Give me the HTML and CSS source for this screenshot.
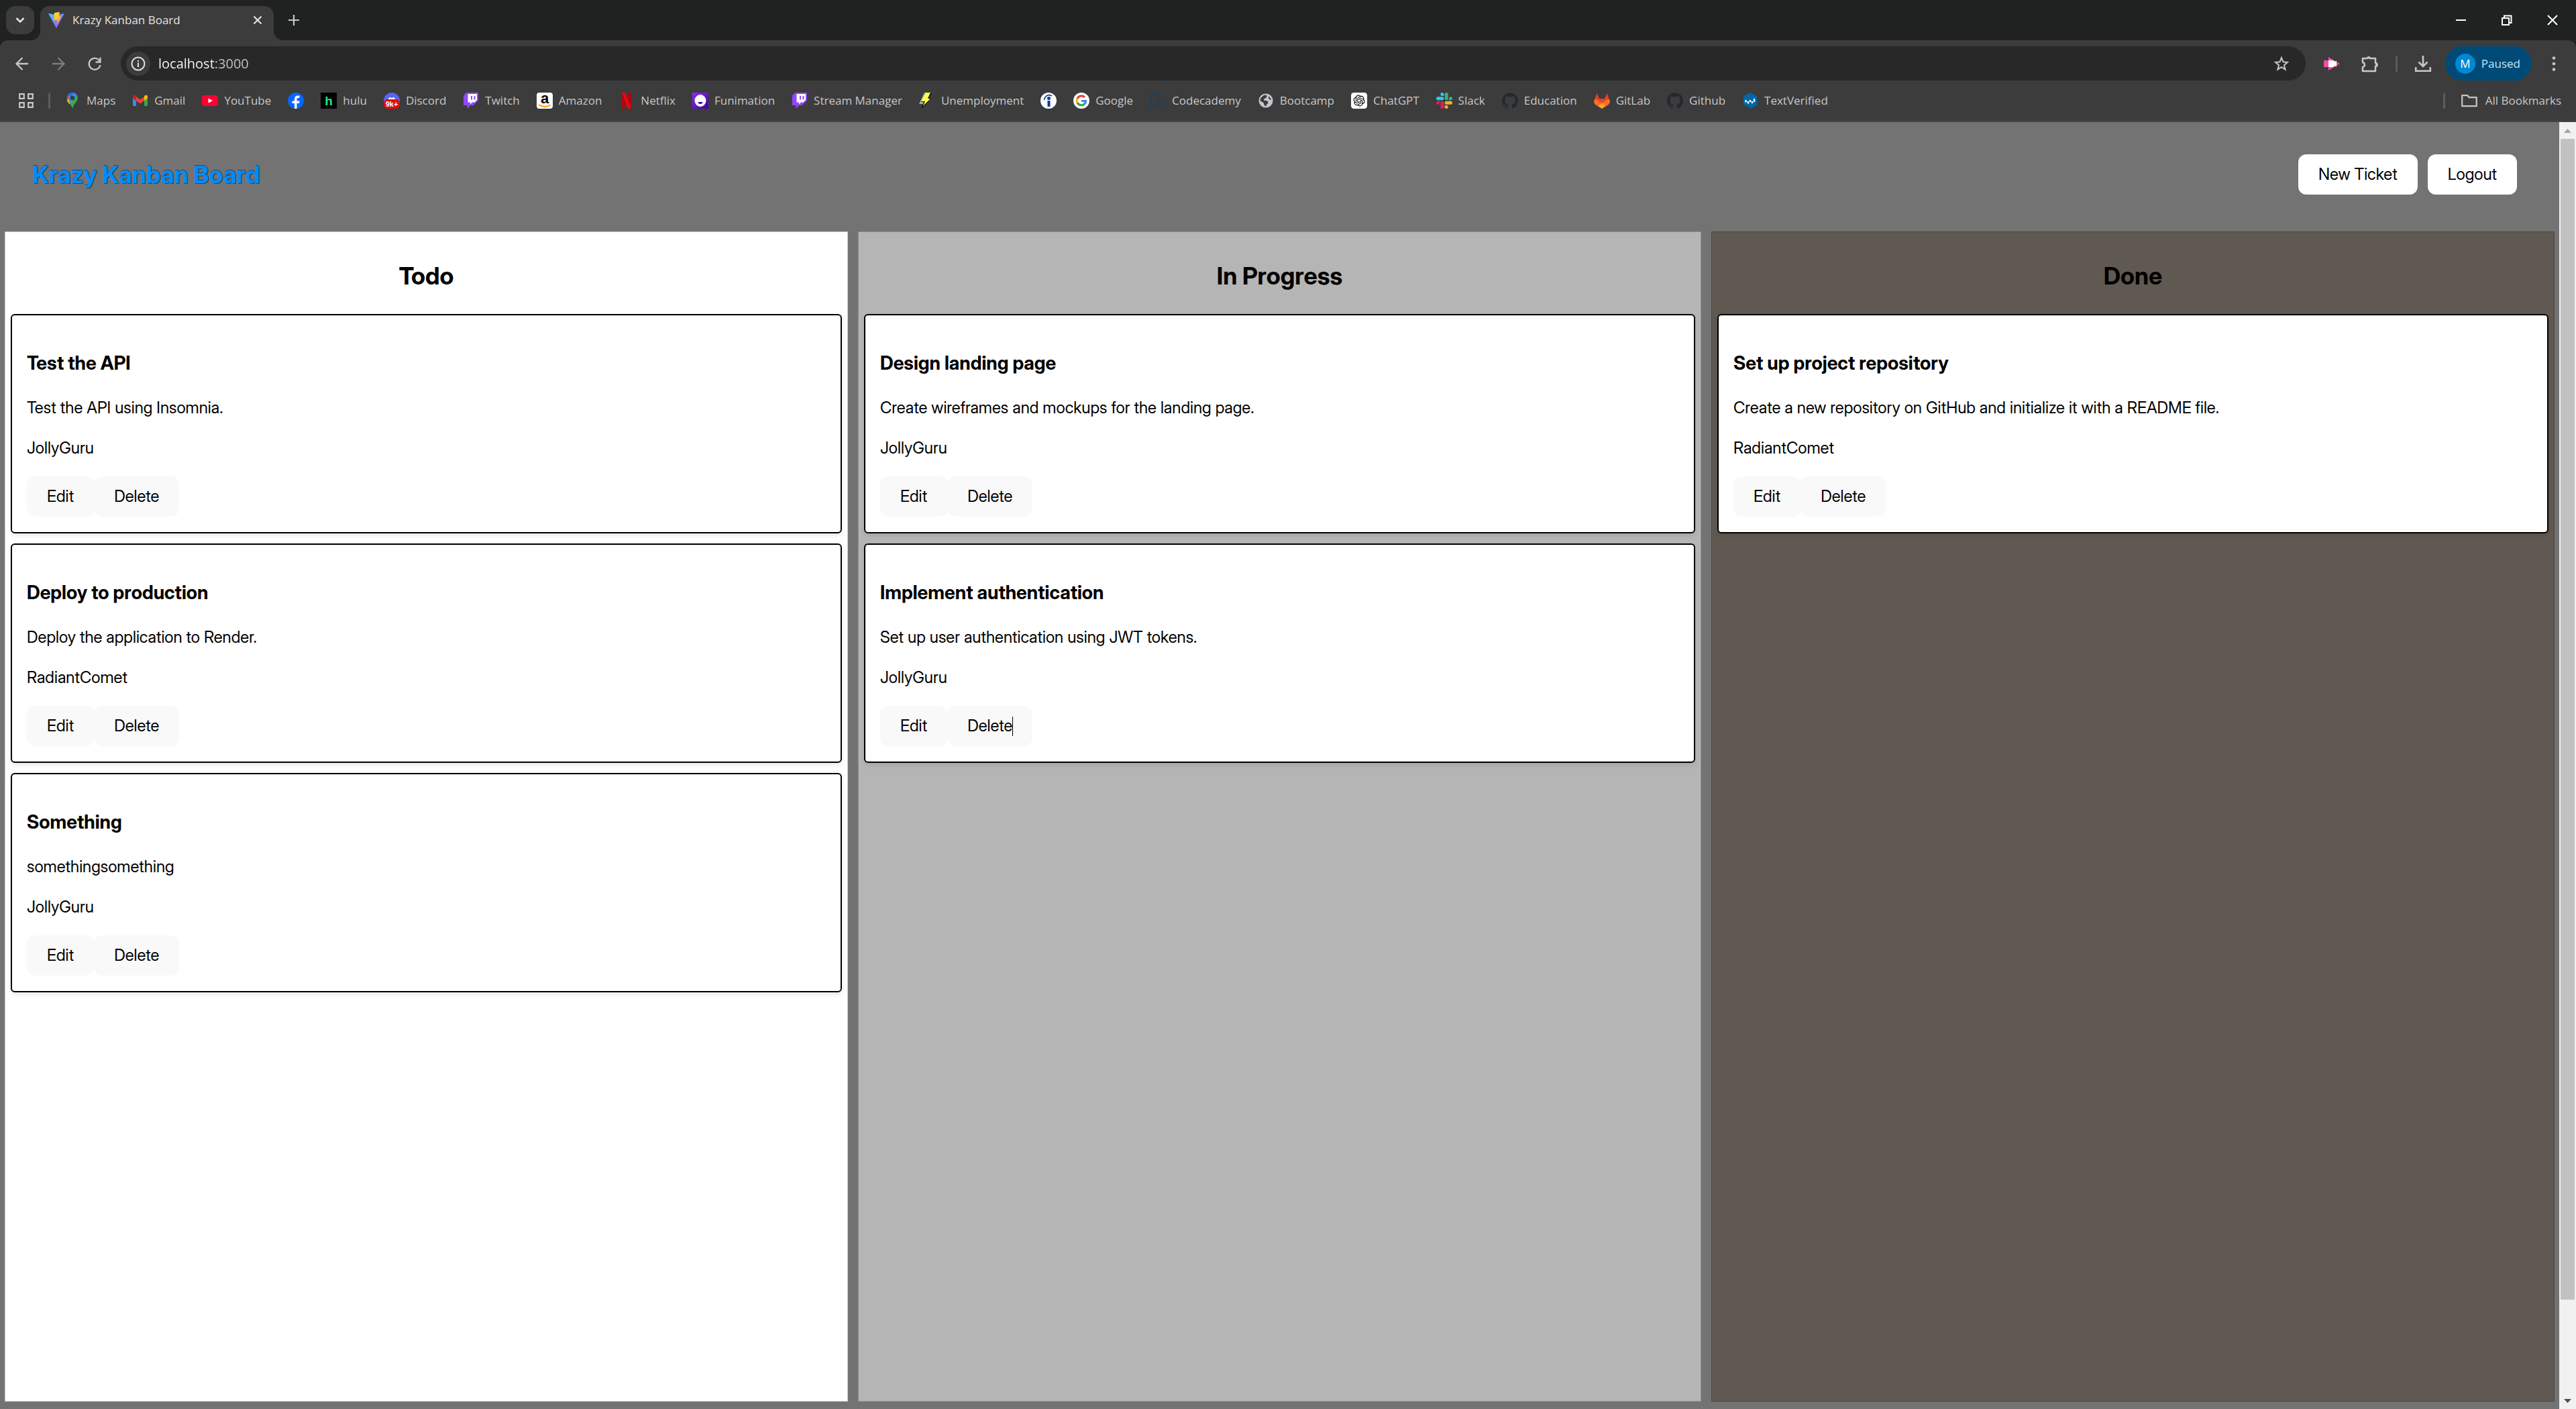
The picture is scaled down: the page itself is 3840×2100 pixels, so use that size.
FILE: index.html
```
<!DOCTYPE html>
<html lang="en">
<head>
<meta charset="utf-8">
<meta name="viewport" content="width=device-width, initial-scale=1">
<title>Krazy Kanban Board</title>
<link rel="stylesheet" href="styles.css">
</head>
<body>
<svg class="sprite" aria-hidden="true">
  <defs>
    <linearGradient id="vite-body" x1="0" y1="0" x2="1" y2="1"><stop offset="0" stop-color="#41d1ff"/><stop offset="1" stop-color="#bd34fe"/></linearGradient>
    <linearGradient id="vite-bolt" x1="0" y1="0" x2="0" y2="1"><stop offset="0" stop-color="#ffdd35"/><stop offset="1" stop-color="#ffa800"/></linearGradient>
    <linearGradient id="funi" x1="0" y1="0" x2="1" y2="1"><stop offset="0" stop-color="#8b2ff5"/><stop offset="1" stop-color="#410099"/></linearGradient>
  </defs>
  <symbol id="twitch" viewBox="0 0 24 24"><path fill="#9146ff" d="M5 0 1 4.500V19h5.500v5l5-5h4L23 11.500V0z"/><path fill="#fff" d="M7.500 2H21v9l-3.500 3.500H14l-3 3v-3H7.500z"/><path fill="#9146ff" d="M12 5h2v5.500h-2zm4.500 0h2v5.500h-2z"/></symbol>
  <symbol id="github" viewBox="0 0 24 24"><path fill="#24292f" d="M12 .297c-6.630 0-12 5.373-12 12 0 5.303 3.438 9.800 8.205 11.385.6.113.82-.258.82-.577 0-.285-.01-1.040-.015-2.040-3.338.724-4.042-1.610-4.042-1.610C4.422 18.070 3.633 17.700 3.633 17.700c-1.087-.744.084-.729.084-.729 1.205.084 1.838 1.236 1.838 1.236 1.070 1.835 2.809 1.305 3.495.998.108-.776.417-1.305.76-1.605-2.665-.3-5.466-1.332-5.466-5.930 0-1.310.465-2.380 1.235-3.220-.135-.303-.54-1.523.105-3.176 0 0 1.005-.322 3.300 1.230.96-.267 1.980-.399 3-.405 1.020.006 2.040.138 3 .405 2.280-1.552 3.285-1.230 3.285-1.230.645 1.653.24 2.873.12 3.176.765.84 1.230 1.910 1.230 3.220 0 4.610-2.805 5.625-5.475 5.920.42.36.81 1.096.81 2.220 0 1.606-.015 2.896-.015 3.286 0 .315.21.69.825.57C20.565 22.092 24 17.592 24 12.297c0-6.627-5.373-12-12-12"/></symbol>
</svg>

<div class="browser">
  <div class="tabstrip">
    <button class="tab-search" aria-label="Search tabs"><svg width="24" height="24" viewBox="0 0 24 24"><path d="M6.500 9l5.500 5.500L17.500 9" fill="none" stroke="#e3e3e3" stroke-width="2.500"/></svg></button>
    <div class="tab">
      <svg width="24" height="24" viewBox="0 0 24 24"><path fill="url(#vite-body)" d="M0 2l12 22L24 2l-8 1.500H8z"/><path fill="url(#vite-bolt)" d="M9 1l8-1-1.500 6.500H19L13 19l.8-7H9l-1-.8z"/></svg>
      <span class="tab-title">Krazy Kanban Board</span>
      <button class="plain" aria-label="Close tab"><svg width="24" height="24" viewBox="0 0 24 24"><path d="M6.500 6.500l11 11m0-11l-11 11" stroke="#e3e3e3" stroke-width="2.200"/></svg></button>
    </div>
    <button class="plain new-tab" aria-label="New tab"><svg width="24" height="24" viewBox="0 0 24 24"><path d="M4 12h16M12 4v16" stroke="#c7c7c7" stroke-width="2.200"/></svg></button>
    <div class="window-buttons">
      <button class="plain" aria-label="Minimize"><svg width="24" height="24" viewBox="0 0 24 24"><path d="M4 12h15" stroke="#fff" stroke-width="2"/></svg></button>
      <button class="plain" aria-label="Restore"><svg width="24" height="24" viewBox="0 0 24 24"><path d="M5 9h10v10H5zM8 8V5.500h10.500V16H16" fill="none" stroke="#fff" stroke-width="2"/></svg></button>
      <button class="plain" aria-label="Close"><svg width="24" height="24" viewBox="0 0 24 24"><path d="M5 5l14 14m0-14L5 19" stroke="#fff" stroke-width="2"/></svg></button>
    </div>
  </div>

  <div class="toolbar">
    <nav class="nav-row" aria-label="Navigation">
      <div class="nav-buttons">
        <button class="plain" aria-label="Back"><svg width="24" height="24" viewBox="0 0 24 24"><path d="M21 12H4.500M12.500 3l-9 9 9 9" fill="none" stroke="#c7c7c7" stroke-width="2.300"/></svg></button>
        <button class="plain" aria-label="Forward"><svg width="24" height="24" viewBox="0 0 24 24"><path d="M3 12h16.500M11.500 3l9 9-9 9" fill="none" stroke="#7c7c7c" stroke-width="2.300"/></svg></button>
        <button class="plain" aria-label="Reload"><svg width="24" height="24" viewBox="0 0 24 24"><path d="M20.500 14A8.500 8.500 0 1 1 18 6l2 2.200M20.500 2.500v7h-7" fill="none" stroke="#c7c7c7" stroke-width="2.300"/></svg></button>
      </div>
      <div class="omnibox">
        <button class="site-info" aria-label="Site information"><svg width="24" height="24" viewBox="0 0 24 24"><circle cx="12" cy="12" r="9.500" fill="none" stroke="#e3e3e3" stroke-width="2"/><path d="M12 10.500V17M12 7v2" stroke="#e3e3e3" stroke-width="2"/></svg></button>
        <input class="url" type="text" value="localhost:3000" aria-label="Address">
        <button class="plain" aria-label="Bookmark"><svg width="24" height="24" viewBox="0 0 24 24"><path d="M12 3l2.500 6.200 6.500.5-5 4.300 1.600 6.600L12 17l-5.600 3.600L8 14 3 9.700l6.500-.5z" fill="none" stroke="#c7c7c7" stroke-width="2"/></svg></button>
      </div>
      <div class="extensions">
        <button class="plain" aria-label="Video extension"><svg width="26" height="24" viewBox="0 0 26 24"><path fill="#f04fa5" d="M1 7h7V2l17 10L8 22v-5H1z"/><path fill="#fff" d="M8 7h7l2 2 3-1.500v9L17 15l-2 2H8z"/></svg></button>
        <button class="plain" aria-label="Extensions"><svg width="26" height="26" viewBox="0 0 26 26"><path d="M3 5h6.500a2.500 2.500 0 0 1 4 0H22v7a2 2 0 0 1 0 5v7H3v-6c4-1 4-6 0-7z" fill="none" stroke="#c7c7c7" stroke-width="2.500" stroke-linejoin="round"/><path fill="#c7c7c7" d="M9 5a3 3 0 0 1 6 0zm13 6a3 3 0 0 1 0 7z"/></svg></button>
        <span class="divider"></span>
        <button class="plain" aria-label="Downloads"><svg width="24" height="24" viewBox="0 0 24 24"><path d="M12 0v16M5.500 9.500L12 16l6.500-6.500M1.200 17v5.800h21.600V17" fill="none" stroke="#c7c7c7" stroke-width="2.600"/></svg></button>
      </div>
      <button class="profile"><span class="avatar">M</span>Paused</button>
      <button class="plain" aria-label="Menu"><svg width="24" height="24" viewBox="0 0 24 24" fill="#c7c7c7"><circle cx="12" cy="3.500" r="2.300"/><circle cx="12" cy="12" r="2.300"/><circle cx="12" cy="20.500" r="2.300"/></svg></button>
    </nav>

    <nav class="bookmarks" aria-label="Bookmarks">
      <button class="plain" aria-label="Apps"><svg width="24" height="24" viewBox="0 0 24 24"><path d="M2.200 2.200h6.600v6.600H2.200zM15.200 2.200h6.600v6.600h-6.600zM2.200 15.200h6.600v6.600H2.200zM15.200 15.200h6.600v6.600h-6.600z" fill="none" stroke="#c7c7c7" stroke-width="2.200"/></svg></button>
      <span class="divider"></span>
      <a href="#"><svg width="24" height="24" viewBox="0 0 24 24"><path fill="#34a853" d="M4.500 13.500L19 4c2.500 5 0 8.500-3 12-2 2.500-3 5-4 8-1-4-3-6.500-7.500-10.500z"/><path fill="#fbbc04" d="M3.800 10c0 2.500 1.500 4.500 3.500 7l8-9z"/><path fill="#ea4335" d="M5.500 3C4 5 3.500 8 4 10.500L9.500 7z"/><path fill="#4285f4" d="M5.500 3C9-1 16-1 19 4L8 16 7 12z"/><path fill="#1a73e8" d="M5.500 3C9-1 13 0 14 0L9 7z"/><circle cx="12" cy="8" r="3.200" fill="#3c3c3c"/></svg>Maps</a>
      <a href="#"><svg width="24" height="24" viewBox="0 0 24 24"><path fill="#4285f4" d="M1 8l5 3.500V20H2.500A1.500 1.500 0 0 1 1 18.500z"/><path fill="#34a853" d="M18 11.500L23 8v10.500a1.500 1.500 0 0 1-1.500 1.500H18z"/><path fill="#ea4335" d="M6 6l6 4.500L18 6v6l-6 4.500L6 12z"/><path fill="#c5221f" d="M1 6c0-2.500 2.500-3 4-2l1 1v7L1 8.500z"/><path fill="#fbbc04" d="M18 5c2-2 5-1.500 5 1v2.500L18 12z"/></svg>Gmail</a>
      <a href="#"><svg width="24" height="24" viewBox="0 0 24 24"><rect y="4" width="24" height="16" rx="4" fill="#ff0033"/><path fill="#fff" d="M9.500 8.500l6.500 3.500-6.500 3.500z"/></svg>YouTube</a>
      <a href="#" aria-label="Facebook"><svg width="24" height="24" viewBox="0 0 24 24"><circle cx="12" cy="12" r="12" fill="#0866ff"/><path fill="#fff" d="M10 24v-8H6.500v-3.500H10V10c0-4 2-5.500 5-5.500l2.500.3V8h-2c-1.500 0-2 .7-2 2v2.500h4L17 16h-3.500v8z"/></svg></a>
      <a href="#"><svg width="24" height="24" viewBox="0 0 24 24"><path d="M0 0h24v24H0z"/><text class="mark" x="12" y="19" font-size="19" fill="#1ce783">h</text></svg>hulu</a>
      <a href="#"><svg width="24" height="24" viewBox="0 0 24 24"><circle cx="12" cy="12" r="12" fill="#5865f2"/><path fill="#fff" d="M6.500 11C7 7.500 9 7 10 7l1 1h2l1-1c1 0 3 .5 3.500 4z"/><rect y="10" width="24" height="14" rx="6" fill="#e00b0b"/><text class="mark" x="12" y="21" font-size="11" fill="#fff">9k+</text></svg>Discord</a>
      <a href="#"><svg width="24" height="24"><use href="#twitch"/></svg>Twitch</a>
      <a href="#"><svg width="24" height="24" viewBox="0 0 24 24"><rect width="24" height="24" rx="4" fill="#fff"/><text class="mark" x="12" y="16" font-size="22">a</text><path d="M3 18q9 6 17.500.5" fill="none" stroke="#ff9900" stroke-width="2"/></svg>Amazon</a>
      <a href="#"><svg width="24" height="24" viewBox="0 0 24 24"><path fill="#b1060f" d="M5 0h5v23.500L5 24zM14 0h5v24l-5-.5z"/><path fill="#e50914" d="M5 0h5l9 24-5-.5z"/></svg>Netflix</a>
      <a href="#"><svg width="24" height="24" viewBox="0 0 24 24"><path fill="url(#funi)" d="M0 0h24v24H0z"/><ellipse cx="12" cy="12" rx="8.500" ry="9" fill="#fff"/><path fill="#410099" d="M8.500 14h7c0 4-7 4-7 0z"/></svg>Funimation</a>
      <a href="#"><svg width="24" height="24"><use href="#twitch"/></svg>Stream Manager</a>
      <a href="#"><svg width="24" height="24" viewBox="0 0 24 24"><path fill="#111" d="M10 1h9l-4 7h4L8 20l-5 4 4-9H2z"/><path fill="#aaa" d="M8 0h2L3 14h4l-1 3H0z"/><path fill="#ffff4d" d="M10 0h7l-4 9h4L6 20l3-7H3z"/></svg>Unemployment</a>
      <a href="#" aria-label="Indeed"><svg width="24" height="24" viewBox="0 0 24 24"><circle cx="12" cy="12" r="12" fill="#fff"/><circle cx="12.500" cy="8.500" r="2.500" fill="#003a9b"/><path d="M12.500 12v9" stroke="#003a9b" stroke-width="4"/><path d="M5.500 11C7 4 12.500 2 17 5" fill="none" stroke="#003a9b" stroke-width="1.600"/></svg></a>
      <a href="#"><svg width="24" height="24" viewBox="0 0 24 24"><circle cx="12" cy="12" r="12" fill="#fff"/><g fill="none" stroke-width="3.200"><path stroke="#ea4335" d="M6 9a6.700 6.700 0 0 1 11-2"/><path stroke="#fbbc05" d="M6 9a7 7 0 0 0 0 6.200"/><path stroke="#34a853" d="M6 15a6.700 6.700 0 0 0 10.500 2"/><path stroke="#4285f4" d="M16.300 17.200c2-1.700 2.300-3.500 2.200-4.700H12"/></g></svg>Google</a>
      <a href="#"><svg width="24" height="24" viewBox="0 0 24 24"><path d="M1.500 2.500h13v18h-13z" fill="none" stroke="#204056" stroke-width="2"/><text class="mark" x="8" y="15" font-size="11" fill="#204056">c</text><path d="M17 21h7" stroke="#204056" stroke-width="2"/></svg>Codecademy</a>
      <a href="#"><svg width="24" height="24" viewBox="0 0 24 24"><circle cx="12" cy="12" r="10.500" fill="#c4c7cc"/><path fill="#3c3c3c" d="M12 3.500c3 2 1 3.500 0 4.500s-3 .5-3 2.500 3 1 5 2 2 3 0 4.500-1 3-2 3.500c-3-1-2-3.500-4-5.500s-4-1.500-4.500-4C4 7 8 4 12 3.500zM16 5.500c2 1.200 3.500 3.500 4 5-1.500.8-3-.5-4-2z"/></svg>Bootcamp</a>
      <a href="#"><svg width="24" height="24" viewBox="-5 -5 34 34"><rect x="-5" y="-5" width="34" height="34" rx="6" fill="#fff"/><path d="M22.282 9.821a5.985 5.985 0 0 0-.516-4.911 6.046 6.046 0 0 0-6.510-2.900A6.065 6.065 0 0 0 4.981 4.182a5.985 5.985 0 0 0-3.998 2.900 6.046 6.046 0 0 0 .743 7.097 5.980 5.980 0 0 0 .511 4.911 6.051 6.051 0 0 0 6.515 2.900A5.985 5.985 0 0 0 13.260 24a6.056 6.056 0 0 0 5.772-4.206 5.989 5.989 0 0 0 3.998-2.900 6.056 6.056 0 0 0-.748-7.073zm-9.022 12.608a4.476 4.476 0 0 1-2.876-1.041l.142-.08 4.778-2.758a.795.795 0 0 0 .393-.681v-6.737l2.020 1.169a.071.071 0 0 1 .038.052v5.583a4.504 4.504 0 0 1-4.495 4.494zm-9.661-4.125a4.471 4.471 0 0 1-.535-3.014l.142.085 4.783 2.758a.771.771 0 0 0 .781 0l5.843-3.369v2.332a.08.08 0 0 1-.033.062L9.740 19.950a4.499 4.499 0 0 1-6.141-1.646zM2.341 7.896a4.485 4.485 0 0 1 2.366-1.973V11.600a.766.766 0 0 0 .388.677l5.814 3.354-2.020 1.169a.076.076 0 0 1-.071 0l-4.830-2.787A4.504 4.504 0 0 1 2.341 7.872zm16.596 3.856L13.104 8.364 15.119 7.200a.076.076 0 0 1 .071 0l4.830 2.791a4.494 4.494 0 0 1-.677 8.104v-5.677a.79.79 0 0 0-.407-.667zm2.011-3.023l-.142-.085-4.774-2.782a.776.776 0 0 0-.785 0L9.409 9.230V6.897a.066.066 0 0 1 .028-.062l4.830-2.787a4.499 4.499 0 0 1 6.680 4.660zM8.307 12.863l-2.020-1.164a.08.08 0 0 1-.038-.057V6.074a4.499 4.499 0 0 1 7.376-3.454l-.142.081L8.704 5.459a.795.795 0 0 0-.393.681zm1.098-2.365l2.602-1.500 2.607 1.500v2.999l-2.597 1.500-2.607-1.500Z"/></svg>ChatGPT</a>
      <a href="#"><svg width="24" height="24" viewBox="0 0 24 24"><path fill="#36c5f0" d="M8.830 0a2.520 2.520 0 0 0 0 5.040h2.520V2.520A2.520 2.520 0 0 0 8.830 0zm0 6.310H2.520a2.520 2.520 0 0 0 0 5.050h6.310a2.520 2.520 0 0 0 0-5.050z"/><path fill="#2eb67d" d="M24 8.830a2.520 2.520 0 0 0-5.040 0v2.530h2.520A2.520 2.520 0 0 0 24 8.830zm-6.310 0V2.520a2.520 2.520 0 0 0-5.050 0v6.310a2.520 2.520 0 0 0 5.050 0z"/><path fill="#ecb22e" d="M15.170 24a2.520 2.520 0 0 0 0-5.040h-2.530v2.520A2.520 2.520 0 0 0 15.170 24zm0-6.310h6.310a2.520 2.520 0 0 0 0-5.050h-6.310a2.520 2.520 0 0 0 0 5.050z"/><path fill="#e01e5a" d="M0 15.170a2.520 2.520 0 0 0 5.040 0v-2.530H2.520A2.520 2.520 0 0 0 0 15.170zm6.310 0v6.310a2.520 2.520 0 0 0 5.050 0v-6.310a2.520 2.520 0 0 0-5.050 0z"/></svg>Slack</a>
      <a href="#"><svg width="24" height="24"><use href="#github"/></svg>Education</a>
      <a href="#"><svg width="24" height="24" viewBox="0 0 24 24"><path fill="#e24329" d="M4.500 1L8 9h8l3.500-8L24 13l-6 7-6 4-6-4-6-7z"/><path fill="#fc6d26" d="M0 13c0-2 1-2.500 2-3 3 0 6 2.500 10 6 4-3.500 7-6 10-6 1 .5 2 1 2 3 0 2-1 4-3 5.500L12 24l-9-5.500C1 17 0 15 0 13z"/><path fill="#fca326" d="M12 15.500l5.500 4.500L12 24l-5.500-4z"/></svg>GitLab</a>
      <a href="#"><svg width="24" height="24"><use href="#github"/></svg>Github</a>
      <a href="#"><svg width="24" height="24" viewBox="0 0 24 24"><path fill="#0067a8" d="M12 0l10 5.500v13L12 24v-2L2 17.500v-12z"/><path d="M5.500 11v3.500M9 13v3.500M12 11v3M15 13v3M18 9v5" stroke="#fff" stroke-width="2.400"/></svg>TextVerified</a>
      <div class="all-bookmarks">
        <span class="divider"></span>
        <a href="#"><svg width="24" height="24" viewBox="0 0 24 24"><path d="M1.200 4.200h8l2.500 3h11v13H1.200z" fill="none" stroke="#c7c7c7" stroke-width="2.200" stroke-linejoin="round"/></svg>All Bookmarks</a>
      </div>
    </nav>
  </div>
</div>

<div class="viewport">
  <div class="app">
    <header class="app-header">
      <h1>Krazy Kanban Board</h1>
      <div class="actions"><button class="btn solid">New Ticket</button><button class="btn solid">Logout</button></div>
    </header>
    <main class="board">
      <section class="column todo">
        <h2>Todo</h2>
        <div class="cards">
          <article class="card"><h3>Test the API</h3><p>Test the API using Insomnia.</p><p>JollyGuru</p><div class="card-actions"><button class="btn">Edit</button><button class="btn">Delete</button></div></article>
          <article class="card"><h3>Deploy to production</h3><p>Deploy the application to Render.</p><p>RadiantComet</p><div class="card-actions"><button class="btn">Edit</button><button class="btn">Delete</button></div></article>
          <article class="card"><h3>Something</h3><p>somethingsomething</p><p>JollyGuru</p><div class="card-actions"><button class="btn">Edit</button><button class="btn">Delete</button></div></article>
        </div>
      </section>
      <section class="column progress">
        <h2>In Progress</h2>
        <div class="cards">
          <article class="card"><h3>Design landing page</h3><p>Create wireframes and mockups for the landing page.</p><p>JollyGuru</p><div class="card-actions"><button class="btn">Edit</button><button class="btn">Delete</button></div></article>
          <article class="card"><h3>Implement authentication</h3><p>Set up user authentication using JWT tokens.</p><p>JollyGuru</p><div class="card-actions"><button class="btn">Edit</button><button class="btn caret">Delete</button></div></article>
        </div>
      </section>
      <section class="column done">
        <h2>Done</h2>
        <div class="cards">
          <article class="card"><h3>Set up project repository</h3><p>Create a new repository on GitHub and initialize it with a README file.</p><p>RadiantComet</p><div class="card-actions"><button class="btn">Edit</button><button class="btn">Delete</button></div></article>
        </div>
      </section>
    </main>
  </div>
  <div class="scrollbar" aria-hidden="true">
    <svg width="25" height="25" viewBox="0 0 25 25"><path fill="#a3a3a3" d="M7 16l5.500-6 5.500 6z"/></svg>
    <div class="track"><div class="thumb"></div></div>
    <svg width="25" height="25" viewBox="0 0 25 25"><path fill="#505050" d="M7 10l5.500 6 5.500-6z"/></svg>
  </div>
</div>
</body>
</html>
```
FILE: styles.css
```
* { box-sizing: border-box; }

body {
  margin: 0;
  min-height: 100vh;
  display: flex;
  flex-direction: column;
  background: #737373;
  color: #000;
  font: 24px/36px "Inter Display", Inter, sans-serif;
}

svg { display: block; flex: none; overflow: visible; }
.sprite { position: absolute; width: 0; height: 0; }
.mark { font-family: "Liberation Sans", sans-serif; font-weight: 700; text-anchor: middle; }
button { font: inherit; color: inherit; border: 0; margin: 0; cursor: pointer; }
.plain { display: block; padding: 0; background: none; }

/* Browser window frame */
.browser {
  background: #1f2221;
  color: #c7c7c7;
  font: 17px/24px "Open Sans", sans-serif;
}

.tabstrip { display: flex; align-items: center; height: 60px; padding-left: 9px; }
.tab-search {
  display: grid;
  place-items: center;
  width: 42px;
  height: 42px;
  padding: 0;
  border-radius: 14px;
  background: #3c3c3c;
}
.tab {
  position: relative;
  display: flex;
  align-items: center;
  align-self: flex-end;
  gap: 12px;
  width: 348px;
  height: 51px;
  margin-left: 9px;
  padding: 0 12px 9px;
  border-radius: 14px 14px 0 0;
  background: #3c3c3c;
  color: #e3e3e3;
}
.tab::before, .tab::after {
  content: "";
  position: absolute;
  bottom: 0;
  width: 14px;
  height: 14px;
}
.tab::before { right: 100%; background: radial-gradient(circle at 0 0, transparent 14px, #3c3c3c 14px); }
.tab::after { left: 100%; background: radial-gradient(circle at 100% 0, transparent 14px, #3c3c3c 14px); }
.tab-title { flex: 1; }
.new-tab { margin-left: 18px; }
.window-buttons { display: flex; gap: 44px; margin-left: auto; padding-right: 23px; }

.toolbar {
  padding-top: 9px;
  border-bottom: 2px solid #474747;
  border-radius: 12px 12px 0 0;
  background: #3c3c3c;
}
.nav-row { display: flex; align-items: center; height: 51px; padding: 0 21px; }
.nav-buttons { display: flex; gap: 30px; margin-right: 27px; }
.omnibox {
  flex: 1;
  display: flex;
  align-items: center;
  height: 51px;
  padding: 0 24px 0 8px;
  border-radius: 26px;
  background: #282828;
}
.site-info {
  display: grid;
  place-items: center;
  width: 36px;
  height: 36px;
  padding: 0;
  border-radius: 50%;
  background: #3c3c3c;
}
.url {
  flex: 1;
  margin: 0 12px;
  padding: 0;
  border: 0;
  outline: 0;
  font: 20px/30px "Open Sans", sans-serif;
  background: linear-gradient(to right, #fff 84px, #c7c7c7 84px);
  background-clip: text;
  -webkit-background-clip: text;
  color: transparent;
}
.extensions { display: flex; align-items: center; gap: 26px; margin: 0 21px 0 26px; }
.extensions .plain:first-child { margin-right: 4px; }
.divider { flex: none; width: 3px; height: 24px; border-radius: 2px; background: #5c5c5c; }
.profile {
  display: flex;
  align-items: center;
  gap: 9px;
  height: 51px;
  margin-right: 21px;
  padding: 0 17px 0 15px;
  border-radius: 26px;
  background: #004a77;
  color: #c2e7ff;
}
.avatar {
  width: 30px;
  height: 30px;
  border-radius: 50%;
  background: #0288d1;
  color: #fff;
  line-height: 30px;
  text-align: center;
}

.bookmarks { display: flex; align-items: center; gap: 25px; height: 60px; padding: 0 22px 0 27px; }
.bookmarks > .divider { margin: 0 -4px; }
.bookmarks a { display: flex; align-items: center; gap: 9px; color: inherit; text-decoration: none; }
.all-bookmarks { display: flex; align-items: center; gap: 24px; margin-left: auto; }
.all-bookmarks a { gap: 12px; }

/* Page area */
.viewport { flex: 1; display: flex; }
.app { flex: 1; display: flex; flex-direction: column; min-width: 0; }

.scrollbar { display: flex; flex-direction: column; width: 25px; background: #f1f1f1; }
.track { flex: 1; display: flex; flex-direction: column; padding: 0 2px; }
.track::after { content: ""; flex: 2; }
.thumb { flex: 25; background: #c1c1c1; }

.app-header {
  display: flex;
  align-items: center;
  justify-content: space-between;
  padding: 48px 63px 48px 48px;
}
h1, h2, h3, p { margin: 0; }
h1 {
  font-size: 36px;
  line-height: 54px;
  color: #008cff;
  text-shadow: 0 -1px 0 rgba(0, 0, 0, .45), 1px 1px 0 rgba(0, 0, 0, .45);
}
.actions { display: flex; gap: 15px; }

.btn {
  position: relative;
  height: 60px;
  padding: 0 30px;
  border-radius: 12px;
  background: #f9f9f9;
}
.solid { background: #fff; }
.caret::after {
  content: "";
  position: absolute;
  right: 29px;
  top: 16px;
  width: 1px;
  height: 29px;
  background: #000;
}

.board {
  flex: 1;
  display: grid;
  grid-template-columns: repeat(3, 1fr);
  gap: 15px;
  padding: 7px 7px 11px;
}
.column { padding: 8px; border: 1px solid rgba(0, 0, 0, .2); }
.todo { background: #fff; }
.progress { background: #b5b5b5; }
.done { background: #605952; }
h2 { margin: 30px 0; font-size: 36px; line-height: 54px; text-align: center; }

.cards { display: grid; gap: 15px; }
.card {
  padding: 22px 22px 23px;
  border: 2px solid #000;
  border-radius: 6px;
  background: #fff;
  box-shadow: 0 3px 6px rgba(0, 0, 0, .1);
}
h3 { margin: 28px 0; font-size: 28px; line-height: 42px; }
.card p { margin-bottom: 24px; }
.card-actions { display: flex; }
```
